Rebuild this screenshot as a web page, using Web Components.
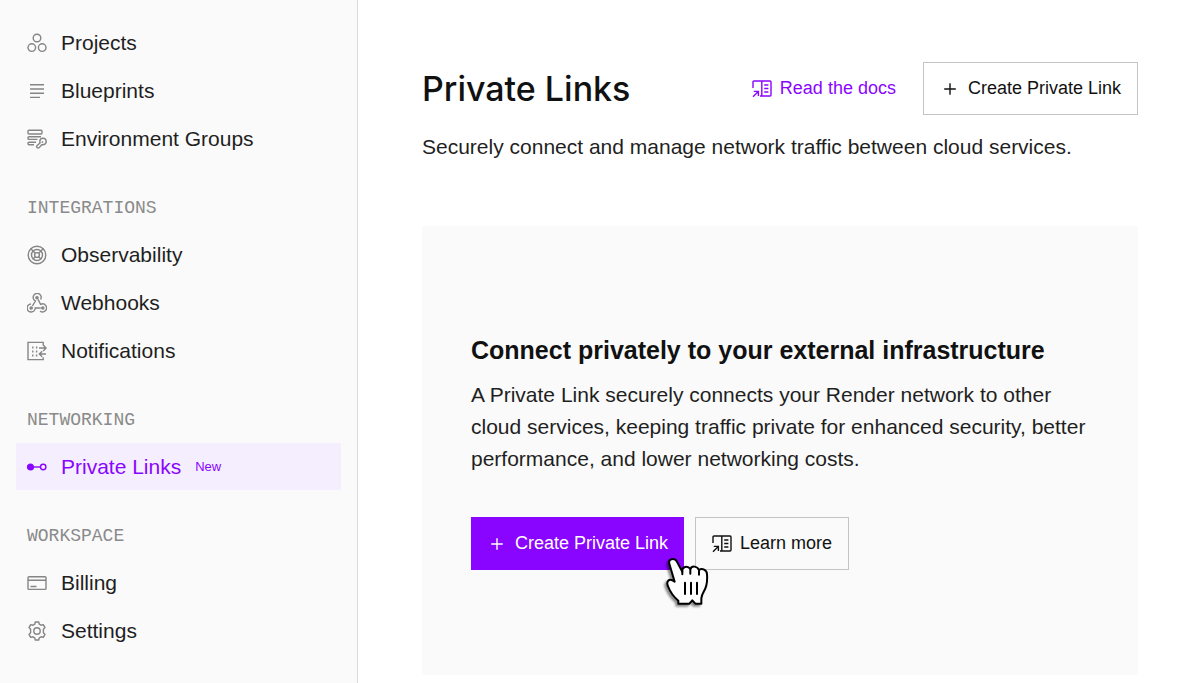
<!DOCTYPE html>
<html lang="en">
<head>
<meta charset="utf-8">
<meta name="viewport" content="width=device-width, initial-scale=1">
<title>Private Links</title>
<style>
    body {
        margin: 0;
        background-color: #ffffff;
        color: #1f1f1f;
        font-family: "Liberation Sans", Arial, sans-serif;
    }
</style>
</head>
<body>
<app-layout>
    <side-nav slot="nav">
        <nav-section>
            <nav-item icon="projects">Projects</nav-item>
            <nav-item icon="blueprints">Blueprints</nav-item>
            <nav-item icon="groups">Environment Groups</nav-item>
        </nav-section>
        <nav-section label="INTEGRATIONS">
            <nav-item icon="observability">Observability</nav-item>
            <nav-item icon="webhooks">Webhooks</nav-item>
            <nav-item icon="notifications">Notifications</nav-item>
        </nav-section>
        <nav-section label="NETWORKING">
            <nav-item icon="link" badge="New" active>Private Links</nav-item>
        </nav-section>
        <nav-section label="WORKSPACE">
            <nav-item icon="billing">Billing</nav-item>
            <nav-item icon="settings">Settings</nav-item>
        </nav-section>
    </side-nav>
    <page-header>
        Private Links
        <docs-link slot="actions">Read the docs</docs-link>
        <action-button slot="actions" icon="plus">Create Private Link</action-button>
        <span slot="description">Securely connect and manage network traffic between cloud services.</span>
    </page-header>
    <empty-state>
        <span slot="title">Connect privately to your external infrastructure</span>
        A Private Link securely connects your Render network to other cloud services, keeping traffic private for enhanced security, better performance, and lower networking costs.
        <action-button slot="actions" icon="plus" variant="primary">Create Private Link<hand-cursor slot="overlay"></hand-cursor></action-button>
        <action-button slot="actions" icon="docs">Learn more</action-button>
    </empty-state>
</app-layout>

<script>
const ICONS = {
    projects: `
        <circle cx="10" cy="5" r="3.8"/>
        <circle cx="4.8" cy="14.6" r="3.8"/>
        <circle cx="15.2" cy="14.6" r="3.8"/>`,
    blueprints: `<path d="M3 3.8h14M3 8h14M3 12.2h14M3 16.4h10"/>`,
    groups: `
        <rect x="1" y="1.2" width="14" height="3.8" rx="1"/>
        <path d="M14 7.8H2a1 1 0 0 0-1 1v.6a1 1 0 0 0 1 1h8.5"/>
        <path d="M9 13.2H2a1 1 0 0 0-1 1v.6a1 1 0 0 0 1 1h5"/>
        <path d="M12.8 12.4a3.2 3.2 0 1 1 3.4 3.3h-1.4l-2.6 2.9a1.4 1.4 0 0 1-2.1-2.1l2.9-2.6z"/>
        <path d="M14.8 13.8l1.2-1.2"/>`,
    observability: `
        <circle cx="10" cy="10" r="8.8"/>
        <circle cx="10" cy="10" r="5.5"/>
        <circle cx="10" cy="10" r="2.4"/>
        <path d="M3.8 3.8l4.5 4.5M16.2 3.8l-4.5 4.5M6.1 13.9l2.2-2.2M13.9 13.9l-2.2-2.2"/>`,
    webhooks: `
        <circle cx="10" cy="4.8" r="1.1" fill="currentColor"/>
        <circle cx="4.2" cy="15" r="1.1" fill="currentColor"/>
        <circle cx="15.8" cy="15" r="1.1" fill="currentColor"/>
        <path d="M5.4 13l3-5A4 4 0 1 1 13.6 6.5"/>
        <path d="M11 6.4l2.6 5A4 4 0 1 1 13 18"/>
        <path d="M13.8 15H8.2A4 4 0 1 1 4 11"/>`,
    notifications: `
        <path d="M16.2 4.2V1.4H1v17.2h15.2v-2.4"/>
        <path d="M5.8 5.4v10M9.6 5.4v10" stroke-dasharray="2 2"/>
        <path d="M12 7h7M16.2 4.1L19.1 7l-2.9 2.9M19 13h-6.6M15.2 10.2L12.3 13l2.9 2.8"/>`,
    link: `
        <circle cx="3.5" cy="10" r="2.9" fill="currentColor"/>
        <path d="M5 10h8.2"/>
        <circle cx="16.2" cy="10" r="2.7"/>`,
    billing: `
        <rect x="1" y="3.8" width="18" height="12.6" rx="1"/>
        <path d="M1 7.2h18M3.5 13.5h6"/>`,
    settings: `
        <circle cx="10" cy="10" r="3.2"/>
        <path d="M7.7 3.2L8.3 1h3.4l.6 2.2 1.8 1 2.2-.6L18 6.6l-1.6 1.6v3.6L18 13.4l-1.7 3-2.2-.6-1.8 1-.6 2.2H8.3l-.6-2.2-1.8-1-2.2.6-1.7-3 1.6-1.6V8.2L2 6.6l1.7-3 2.2.6z" stroke-linejoin="round"/>`,
    plus: `<path d="M10 4.2v11.6M4.2 10h11.6"/>`,
    docs: `
        <path d="M1 9V3a1 1 0 0 1 1-1h7.8v15H8M9.8 2h8.2a1 1 0 0 1 1 1v13a1 1 0 0 1-1 1H9.8"/>
        <path d="M12.2 6h4.2M12.2 9.5h4.2M12.2 13h4.2"/>
        <path d="M1 17.8l5-5M1.8 12.4h4.6V17"/>`
};

const svg = name => `<svg viewBox="0 0 20 20" aria-hidden="true">${ICONS[name] || ''}</svg>`;

const iconStyle = /*css*/ `
    svg {
        width: 20px;
        height: 20px;
        flex: none;
        fill: none;
        stroke: currentColor;
        stroke-width: 1.4;
    }
`;

class AppLayout extends HTMLElement {
    constructor() {
        super();
        this.attachShadow({mode: 'open'});
        this.shadowRoot.innerHTML = /*html*/ `
            <style>
                :host {
                    display: grid;
                    grid-template-columns: 358px minmax(0, 1fr);
                    min-height: 100vh;
                }

                main {
                    padding: 62px 62px 8px 64px;
                }
            </style>
            <slot name="nav"></slot>
            <main><slot></slot></main>
        `;
    }
}

class SideNav extends HTMLElement {
    constructor() {
        super();
        this.attachShadow({mode: 'open'});
        this.shadowRoot.innerHTML = /*html*/ `
            <style>
                :host {
                    display: block;
                    box-sizing: border-box;
                    padding: 19px 16px;
                    background-color: #fafafa;
                    border-right: 1px solid #dcdcdc;
                }

                nav {
                    display: flex;
                    flex-direction: column;
                    gap: 21px;
                }
            </style>
            <nav aria-label="Main"><slot></slot></nav>
        `;
    }
}

class NavSection extends HTMLElement {
    constructor() {
        super();
        this.attachShadow({mode: 'open'});
        const label = this.getAttribute('label');
        this.shadowRoot.innerHTML = /*html*/ `
            <style>
                :host {
                    display: flex;
                    flex-direction: column;
                    gap: 1px;
                }

                .label {
                    padding: 3px 0 0 11px;
                    color: #8a8a8a;
                    font-family: "Liberation Mono", "Courier New", monospace;
                    font-size: 18px;
                    line-height: 44px;
                }
            </style>
            ${label ? `<div class="label">${label}</div>` : ''}
            <slot></slot>
        `;
    }
}

class NavItem extends HTMLElement {
    constructor() {
        super();
        this.attachShadow({mode: 'open'});
        const badge = this.getAttribute('badge');
        this.shadowRoot.innerHTML = /*html*/ `
            <style>
                :host {
                    display: block;
                }

                a {
                    display: flex;
                    align-items: center;
                    height: 47px;
                    padding: 0 11px;
                    gap: 14px;
                    color: inherit;
                    font-size: 21px;
                    text-decoration: none;
                }

                ${iconStyle}

                svg {
                    color: #858585;
                }

                .badge {
                    font-size: 13px;
                }

                :host([active]) a {
                    background-color: #f4eeff;
                    color: #8a05ff;
                }

                :host([active]) svg {
                    color: inherit;
                }
            </style>
            <a href="#">
                ${svg(this.getAttribute('icon'))}
                <span><slot></slot></span>
                ${badge ? `<span class="badge">${badge}</span>` : ''}
            </a>
        `;
    }
}

class ActionButton extends HTMLElement {
    constructor() {
        super();
        this.attachShadow({mode: 'open'});
        this.shadowRoot.innerHTML = /*html*/ `
            <style>
                :host {
                    display: block;
                    position: relative;
                }

                button {
                    display: flex;
                    align-items: center;
                    gap: 8px;
                    height: 53px;
                    padding: 0 16px;
                    border: 1px solid #c4c4c4;
                    background-color: transparent;
                    color: #111111;
                    font: inherit;
                    font-size: 18px;
                    white-space: nowrap;
                }

                ${iconStyle}

                :host([variant="primary"]) button {
                    border: 0;
                    background-color: #8a05ff;
                    color: #ffffff;
                }
            </style>
            <button type="button">${svg(this.getAttribute('icon'))}<span><slot></slot></span></button>
            <slot name="overlay"></slot>
        `;
    }
}

class DocsLink extends HTMLElement {
    constructor() {
        super();
        this.attachShadow({mode: 'open'});
        this.shadowRoot.innerHTML = /*html*/ `
            <style>
                :host {
                    display: block;
                }

                a {
                    display: flex;
                    align-items: center;
                    gap: 8px;
                    color: #8a05ff;
                    font-size: 18px;
                    text-decoration: none;
                    white-space: nowrap;
                }

                ${iconStyle}
            </style>
            <a href="#">${svg('docs')}<span><slot></slot></span></a>
        `;
    }
}

class PageHeader extends HTMLElement {
    constructor() {
        super();
        this.attachShadow({mode: 'open'});
        this.shadowRoot.innerHTML = /*html*/ `
            <style>
                :host {
                    display: block;
                    margin-bottom: 63px;
                }

                header {
                    display: flex;
                    align-items: center;
                    justify-content: space-between;
                }

                h1 {
                    margin: 0;
                    color: #111111;
                    font-family: Inter, "Liberation Sans", sans-serif;
                    font-size: 34px;
                    font-weight: 500;
                }

                .actions {
                    display: flex;
                    align-items: center;
                    gap: 27px;
                }

                p {
                    margin: 16px 0 0;
                    font-size: 21px;
                    line-height: 32px;
                }
            </style>
            <header>
                <h1><slot></slot></h1>
                <div class="actions"><slot name="actions"></slot></div>
            </header>
            <p><slot name="description"></slot></p>
        `;
    }
}

class EmptyState extends HTMLElement {
    constructor() {
        super();
        this.attachShadow({mode: 'open'});
        this.shadowRoot.innerHTML = /*html*/ `
            <style>
                :host {
                    display: block;
                    padding: 108px 49px 105px;
                    background-color: #fafafa;
                }

                h2 {
                    margin: 0;
                    color: #111111;
                    font-size: 25px;
                    line-height: 32px;
                }

                p {
                    margin: 13px 0 42px;
                    font-size: 21px;
                    line-height: 32px;
                }

                .actions {
                    display: flex;
                    gap: 11px;
                }
            </style>
            <h2><slot name="title"></slot></h2>
            <p><slot></slot></p>
            <div class="actions"><slot name="actions"></slot></div>
        `;
    }
}

class HandCursor extends HTMLElement {
    constructor() {
        super();
        this.attachShadow({mode: 'open'});
        this.shadowRoot.innerHTML = /*html*/ `
            <style>
                :host {
                    position: absolute;
                    top: 38px;
                    right: -26px;
                    z-index: 1;
                    pointer-events: none;
                }

                svg {
                    display: block;
                    width: 50px;
                    height: 54px;
                    overflow: visible;
                    filter: drop-shadow(-2px 2px 1px rgba(0, 0, 0, 0.45));
                }
            </style>
            <svg viewBox="0 0 150 162" aria-hidden="true" fill="#ffffff" stroke="#000000" stroke-width="6" stroke-linejoin="round" stroke-linecap="round">
                <path d="M28 26C23 11 44 7 51 20L67 50C65 34 83 31 91 42C96 31 111 33 117 45C126 38 141 44 141 58C143 82 138 99 131 110Q125 120 124 130V146H106L97 136L88 146H55V137C43 127 30 109 25 96C17 80 26 67 44 80Z"/>
                <path d="M75 83v34M93 83v34M111 83v34" fill="none"/>
                <path d="M67 50v8M91 42v14M117 45v14" fill="none"/>
            </svg>
        `;
    }
}

window.customElements.define('app-layout', AppLayout);
window.customElements.define('side-nav', SideNav);
window.customElements.define('nav-section', NavSection);
window.customElements.define('nav-item', NavItem);
window.customElements.define('action-button', ActionButton);
window.customElements.define('docs-link', DocsLink);
window.customElements.define('page-header', PageHeader);
window.customElements.define('empty-state', EmptyState);
window.customElements.define('hand-cursor', HandCursor);
</script>
</body>
</html>
